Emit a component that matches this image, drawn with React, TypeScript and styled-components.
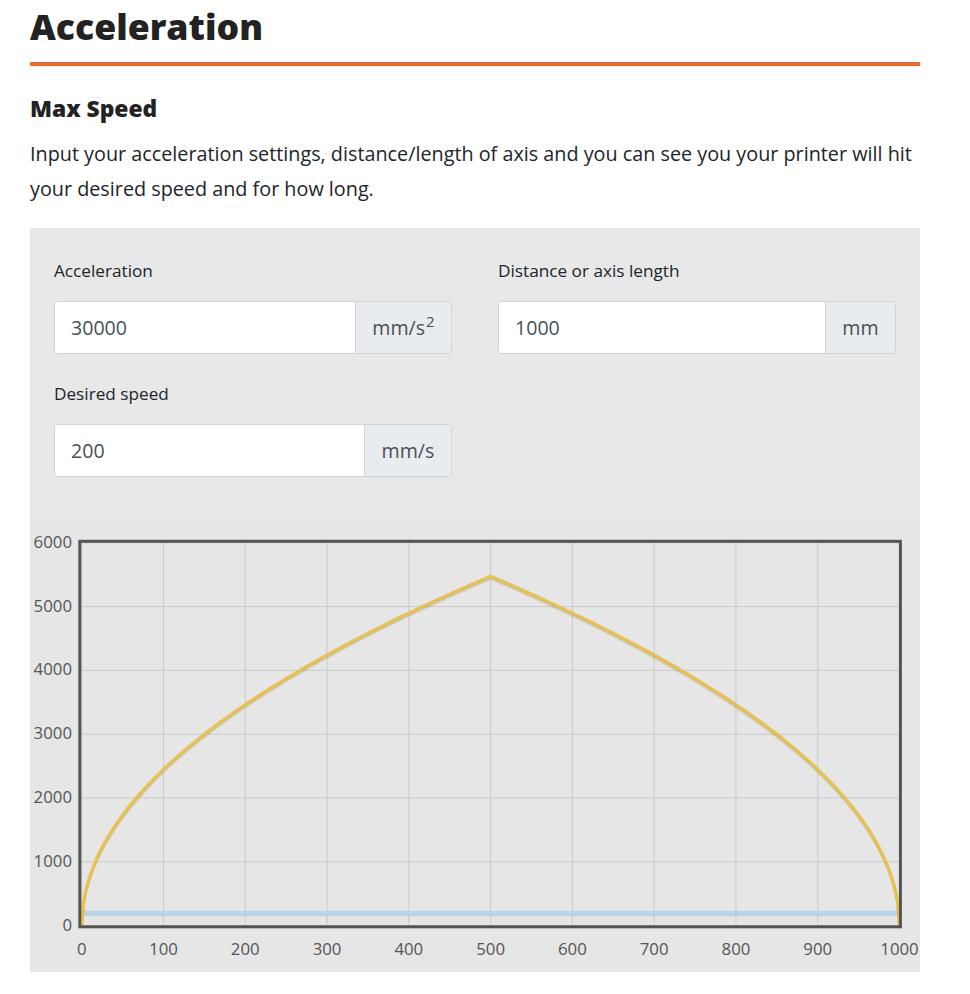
import React, { useState, useMemo } from "react";
import styled, { createGlobalStyle } from "styled-components";

const GlobalStyle = createGlobalStyle`
  html, body { margin: 0; padding: 0; background: #ffffff; }
  body { font-family: "Open Sans", "Noto Sans", sans-serif; color: #212529; }
  * { box-sizing: border-box; }
`;

const Page = styled.div`
  width: 950px;
  padding: 0 30px;
`;

const Title = styled.h1`
  margin: 0;
  font-size: 35.6px;
  font-weight: 800;
  line-height: 52px;
  color: #222222;
  padding-bottom: 10px;
  border-bottom: 4px solid #f3682f;
  width: 890px;
`;

const SubTitle = styled.h2`
  margin: 28px 0 0;
  font-size: 22.8px;
  font-weight: 800;
  line-height: 30px;
  color: #222222;
`;

const Intro = styled.p`
  margin: 12px 0 0;
  font-size: 19.8px;
  line-height: 35px;
  color: #212529;
  width: 890px;
`;

const Panel = styled.section`
  margin-top: 22px;
  width: 890px;
  background: #e8e8e8;
`;

const Form = styled.div`
  display: grid;
  grid-template-columns: 398px 398px;
  column-gap: 46px;
  row-gap: 28px;
  padding: 31px 24px 45px;
`;

const Field = styled.div`
  display: flex;
  flex-direction: column;
`;

const Label = styled.label`
  font-size: 17.2px;
  line-height: 24px;
  color: #212529;
  margin-bottom: 18px;
`;

const InputGroup = styled.div`
  display: flex;
  height: 53px;
  border: 1px solid #ced4da;
  border-radius: 4px;
  overflow: hidden;
  background: #ffffff;
`;

const Input = styled.input`
  flex: 1;
  min-width: 0;
  border: none;
  outline: none;
  padding: 0 16px;
  font-family: "Open Sans", "Noto Sans", sans-serif;
  font-size: 19.6px;
  color: #495057;
  background: #ffffff;
`;

const Addon = styled.span<{ $w: number }>`
  width: ${(p) => p.$w}px;
  display: flex;
  align-items: center;
  justify-content: center;
  background: #e9ecef;
  border-left: 1px solid #ced4da;
  font-size: 19.6px;
  color: #495057;
  sup { font-size: 15px; line-height: 0; position: relative; top: -7px; margin-left: 1px; }
`;

const ChartWrap = styled.div`
  height: 450px;
  background: #e6e6e6;
  border-top: 1px solid #e2e2e2;
`;

const ChartSvg = styled.svg`
  display: block;
  font-family: "Open Sans", "Noto Sans", sans-serif;
`;

const L = 51.7;
const R = 869.5;
const T = 19.8;
const B = 402.5;

function Chart({ accel, dist, speed }: { accel: number; dist: number; speed: number }) {
  const data = useMemo(() => {
    const pts: [number, number][] = [];
    const n = 400;
    for (let i = 0; i <= n; i++) {
      const x = (dist * i) / n;
      const d = x <= dist / 2 ? x : dist - x;
      pts.push([x, Math.sqrt(2 * accel * Math.max(d, 0))]);
    }
    return pts;
  }, [accel, dist]);
  const maxV = Math.max(...data.map((p) => p[1]), speed);
  const yMax = Math.ceil(maxV / 1000) * 1000 || 1000;
  const xMax = dist || 1000;
  const sx = (x: number) => L + (x / xMax) * (R - L);
  const sy = (v: number) => B - (v / yMax) * (B - T);
  const xt: number[] = [];
  for (let i = 0; i <= 10; i++) xt.push((xMax / 10) * i);
  const yt: number[] = [];
  for (let v = 0; v <= yMax; v += 1000) yt.push(v);
  const path = data.map((p, i) => `${i ? "L" : "M"}${sx(p[0]).toFixed(2)},${sy(p[1]).toFixed(2)}`).join(" ");
  const sp = `M${sx(0)},${sy(speed)} L${sx(xMax)},${sy(speed)}`;
  return (
    <ChartSvg width={890} height={450} viewBox="0 0 890 450">
      {xt.map((x) => (
        <line key={"gx" + x} x1={sx(x)} x2={sx(x)} y1={T} y2={B} stroke="#c9c9c9" strokeWidth={1} />
      ))}
      {yt.map((v) => (
        <line key={"gy" + v} x1={L} x2={R} y1={sy(v)} y2={sy(v)} stroke="#c9c9c9" strokeWidth={1} />
      ))}
      <g fill="none" strokeLinejoin="round">
        <path d={sp} transform="translate(0,2)" stroke="rgba(0,0,0,0.08)" strokeWidth={3} />
        <path d={sp} transform="translate(0,1)" stroke="rgba(0,0,0,0.08)" strokeWidth={3} />
        <path d={sp} stroke="#b3d6f3" strokeWidth={4} />
        <path d={path} transform="translate(0,2.5)" stroke="rgba(0,0,0,0.08)" strokeWidth={3} />
        <path d={path} transform="translate(0,1.2)" stroke="rgba(0,0,0,0.1)" strokeWidth={3} />
        <path d={path} stroke="#edc240" strokeWidth={3} />
      </g>
      <rect x={49.8} y={18.3} width={820.6} height={385.5} fill="none" stroke="#545454" strokeWidth={3} />
      <g fill="#555555" fontSize={16.8}>
        {yt.map((v) => (
          <text key={"ty" + v} x={42} y={sy(v) + 5} textAnchor="end">{v}</text>
        ))}
        {xt.map((x) => (
          <text key={"tx" + x} x={sx(x)} y={432} textAnchor="middle">{Math.round(x)}</text>
        ))}
      </g>
    </ChartSvg>
  );
}

export default function App() {
  const [accel, setAccel] = useState("30000");
  const [dist, setDist] = useState("1000");
  const [speed, setSpeed] = useState("200");
  return (
    <Page>
      <GlobalStyle />
      <Title>Acceleration</Title>
      <SubTitle>Max Speed</SubTitle>
      <Intro>
        Input your acceleration settings, distance/length of axis and you can see you your printer will hit
        your desired speed and for how long.
      </Intro>
      <Panel>
        <Form>
          <Field>
            <Label>Acceleration</Label>
            <InputGroup>
              <Input value={accel} onChange={(e) => setAccel(e.target.value)} />
              <Addon $w={96}>
                mm/s<sup>2</sup>
              </Addon>
            </InputGroup>
          </Field>
          <Field>
            <Label>Distance or axis length</Label>
            <InputGroup>
              <Input value={dist} onChange={(e) => setDist(e.target.value)} />
              <Addon $w={70}>mm</Addon>
            </InputGroup>
          </Field>
          <Field>
            <Label>Desired speed</Label>
            <InputGroup>
              <Input value={speed} onChange={(e) => setSpeed(e.target.value)} />
              <Addon $w={87}>mm/s</Addon>
            </InputGroup>
          </Field>
        </Form>
        <ChartWrap>
          <Chart accel={Number(accel) || 0} dist={Number(dist) || 1000} speed={Number(speed) || 0} />
        </ChartWrap>
      </Panel>
    </Page>
  );
}
